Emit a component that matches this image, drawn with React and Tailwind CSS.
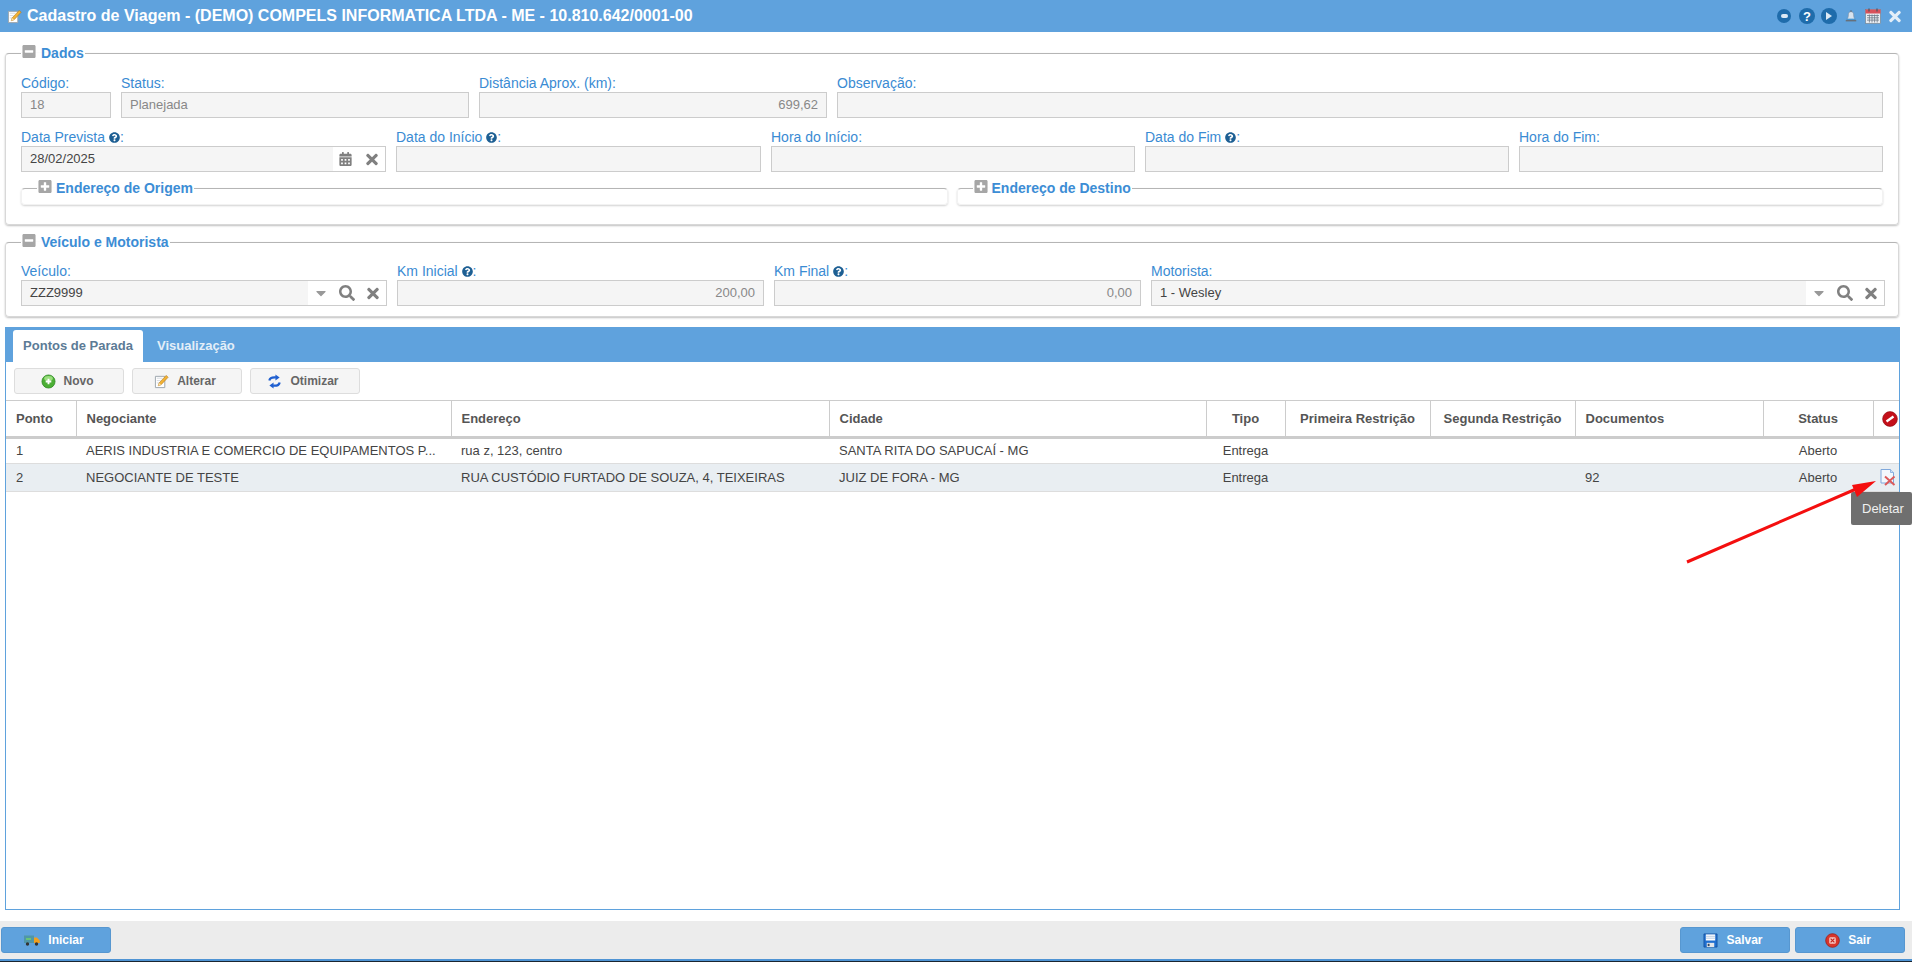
import { FaCalendarAlt, FaSearch, FaTimes, FaCaretDown, FaQuestionCircle, FaMinusSquare, FaPlusSquare } from 'react-icons/fa'

const COLUMNS = [
  { title: 'Ponto', width: 70 },
  { title: 'Negociante', width: 375 },
  { title: 'Endereço', width: 378 },
  { title: 'Cidade', width: 377 },
  { title: 'Tipo', width: 79, center: true },
  { title: 'Primeira Restrição', width: 145, center: true },
  { title: 'Segunda Restrição', width: 145, center: true },
  { title: 'Documentos', width: 188 },
  { title: 'Status', width: 110, center: true },
]

const ROWS = [
  { ponto: '1', negociante: 'AERIS INDUSTRIA E COMERCIO DE EQUIPAMENTOS P...', endereco: 'rua z, 123, centro', cidade: 'SANTA RITA DO SAPUCAÍ - MG', docs: '' },
  { ponto: '2', negociante: 'NEGOCIANTE DE TESTE', endereco: 'RUA CUSTÓDIO FURTADO DE SOUZA, 4, TEIXEIRAS', cidade: 'JUIZ DE FORA - MG', docs: '92' },
]

function PencilDoc({ className }) {
  return (
    <svg viewBox="0 0 16 16" className={className}>
      <path d="M1.5 2.5h10v12h-10z" fill="#fff" stroke="#9aa3ab" strokeWidth="1" />
      <path d="M3 4.5h6M3 7h4M3 9.5h3" stroke="#d5dae0" strokeWidth="1" />
      <path d="M13 1.5l2 2-7.5 8-3 1 1-3z" fill="#f2b233" stroke="#b97a16" strokeWidth="0.7" />
      <path d="M4.5 12.5l1-3 2 2z" fill="#f6dfb0" />
    </svg>
  )
}

function GreenPlus({ className }) {
  return (
    <svg viewBox="0 0 16 16" className={className}>
      <circle cx="8" cy="8" r="7" fill="#4caf35" stroke="#2f8a24" strokeWidth="0.8" />
      <ellipse cx="8" cy="4.8" rx="4.6" ry="2.6" fill="#9ade7e" />
      <path d="M8 5v6M5 8h6" stroke="#fff" strokeWidth="2" />
    </svg>
  )
}

function RefreshArrows({ className }) {
  return (
    <svg viewBox="0 0 16 16" className={className} fill="none">
      <path d="M2.5 7C3 4.5 5.5 3.2 9.5 3.6" stroke="#1f5fd0" strokeWidth="2.4" />
      <path d="M9 0.5l4.5 3.2L9 7z" fill="#1f5fd0" />
      <path d="M13.5 9c-.5 2.5-3 3.8-7 3.4" stroke="#1f5fd0" strokeWidth="2.4" />
      <path d="M7 9l-4.5 3.3L7 15.5z" fill="#1f5fd0" />
    </svg>
  )
}

function RedBlock({ className }) {
  return (
    <svg viewBox="0 0 16 16" className={className}>
      <circle cx="8" cy="8" r="7.4" fill="#c4101a" stroke="#8c0a10" strokeWidth="0.6" />
      <path d="M4.5 10.5l7-5" stroke="#fff" strokeWidth="2.4" />
    </svg>
  )
}

function DeleteDoc({ className }) {
  return (
    <svg viewBox="0 0 16 17" className={className}>
      <path d="M1 .5h9.5l3 3V14H1z" fill="#f4f8fd" stroke="#7fa8dc" strokeWidth="1" />
      <path d="M10.5.5v3h3" fill="#cfe0f5" stroke="#7fa8dc" strokeWidth="0.8" />
      <path d="M5 7.5l9.5 8.5M14.5 7.5L5 16" stroke="#dc5a5a" strokeWidth="2" />
    </svg>
  )
}

function Truck({ className }) {
  return (
    <svg viewBox="0 0 16 11" className={className}>
      <rect x="0" y="0.5" width="10" height="7.5" fill="#4f97a8" />
      <path d="M2 4h5" stroke="#6fd06f" strokeWidth="1.6" />
      <path d="M10 2.5h3l2.8 3V8H10z" fill="#f0a020" />
      <circle cx="3.5" cy="9" r="1.7" fill="#333" />
      <circle cx="12.5" cy="9" r="1.7" fill="#333" />
    </svg>
  )
}

function Floppy({ className }) {
  return (
    <svg viewBox="0 0 16 16" className={className}>
      <path d="M1 1h14v14H1z" fill="#1f6fd0" stroke="#134c96" strokeWidth="0.8" />
      <rect x="3" y="1.5" width="10" height="6.5" fill="#fff" />
      <path d="M3 3.5h10M3 5.5h10" stroke="#9fb9d8" strokeWidth="0.8" />
      <rect x="4" y="10.5" width="8" height="4.5" fill="#e3e6ea" />
      <rect x="5" y="11.5" width="2" height="2.5" fill="#33475f" />
    </svg>
  )
}

function RedClose({ className }) {
  return (
    <svg viewBox="0 0 16 16" className={className}>
      <circle cx="8" cy="8" r="7.3" fill="#d8352b" stroke="#9c1b14" strokeWidth="0.8" />
      <rect x="4.5" y="4.5" width="7" height="7" rx="1.5" fill="#f4c9c5" />
      <path d="M6 6l4 4M10 6l-4 4" stroke="#c4241c" strokeWidth="1.3" />
    </svg>
  )
}

function Bell({ className }) {
  return (
    <svg viewBox="0 0 16 16" className={className}>
      <path d="M7.2 1h1.6v2H7.2z" fill="#555f6b" />
      <path d="M8 2.5c-2 0-3 1.2-3 3.5 0 2.5-.6 4-2 5.5h10c-1.4-1.5-2-3-2-5.5 0-2.3-1-3.5-3-3.5z" fill="#d8e3ee" stroke="#7a8794" strokeWidth="0.6" />
      <path d="M3 10.5h10v1.2H3z" fill="#2f8fd6" />
      <path d="M2 12h12v1.6H2z" fill="#66707b" />
    </svg>
  )
}

function CalendarColor({ className }) {
  return (
    <svg viewBox="0 0 16 16" className={className}>
      <rect x="0.5" y="1.5" width="15" height="14" fill="#e9edf2" stroke="#6d7a88" strokeWidth="0.6" />
      <rect x="0.5" y="1.5" width="15" height="4" fill="#d9515a" />
      <path d="M4 .5v3M12 .5v3" stroke="#4a5560" strokeWidth="1.2" />
      <path d="M2 7.5h12M2 9.8h12M2 12.1h12M4.4 6.5v8M7 6.5v8M9.6 6.5v8M12.2 6.5v8" stroke="#6d7a88" strokeWidth="0.8" />
    </svg>
  )
}

function Help() {
  return <FaQuestionCircle className="inline-block w-[11px] h-[11px] text-[#1d5f93] align-[-1px]" />
}

function Field({ label, help, value, right, width, grow, children }) {
  return (
    <div className={grow ? 'flex-1 min-w-0' : 'shrink-0'} style={grow ? undefined : { width }}>
      <div className="h-[18px] text-[14px] leading-[18px] text-[#3a8bd3] whitespace-nowrap">
        {label}{help ? ' ' : ''}{help && <Help />}{help ? ':' : ''}
      </div>
      {children || (
        <div className={`h-[26px] border border-[#cccccc] bg-[#f5f5f5] px-[8px] text-[13px] leading-[24px] text-[#888888] ${right ? 'text-right' : ''}`}>
          {value}
        </div>
      )}
    </div>
  )
}

function LookupInput({ value, wide, children }) {
  return (
    <div className="h-[26px] border border-[#cccccc] flex items-stretch bg-white">
      <div className="flex-1 bg-[#f5f5f5] px-[8px] text-[13px] leading-[24px] text-[#444444]">{value}</div>
      <div className={`flex items-center justify-between text-[#808080] ${wide ? 'w-[78px] pl-[8px] pr-[7px]' : 'w-[52px] pl-[6px] pr-[7px]'}`}>
        {children}
      </div>
    </div>
  )
}

function CloseGlyph() {
  return <FaTimes className="w-[12px] h-[17px]" />
}

function CaretGlyph() {
  return <FaCaretDown className="w-[10px] h-[16px] text-[#999999]" />
}

function Section({ title, collapsed, nested, className, children }) {
  const Icon = collapsed ? FaPlusSquare : FaMinusSquare
  const look = nested
    ? 'border-[#f2f2f2] border-t-[#b5b5b5] shadow-[0_1px_2px_rgba(0,0,0,0.18)]'
    : 'border-[#d8d8d8] border-t-[#b5b5b5] shadow-[0_1px_2px_rgba(0,0,0,0.25)]'
  return (
    <fieldset className={`border rounded-[4px] min-w-0 ${look} ${className}`}>
      <legend className={`h-[18px] flex items-center text-[14px] font-bold text-[#3c8dd5] px-[1px] ${nested ? 'ml-[15px] gap-[4px]' : 'gap-[5px]'}`}>
        <Icon className="w-[14px] h-[15px] text-[#a6a6a6] -mt-[4px]" />
        {title}
      </legend>
      {children}
    </fieldset>
  )
}

function FormButton({ icon, children, className }) {
  return (
    <button className={`w-[110px] h-[26px] flex items-center justify-center gap-[8px] pr-[4px] rounded-[3px] border text-[12px] font-bold ${className}`}>
      {icon}
      {children}
    </button>
  )
}

export default function App() {
  return (
    <div className="w-[1912px] h-[962px] flex flex-col overflow-hidden bg-white font-['Liberation_Sans',Arial,sans-serif]">
      {/* Header */}
      <header className="h-[32px] shrink-0 bg-[#5fa2dd] flex items-center pl-[7px] pr-[11px]">
        <PencilDoc className="w-[15px] h-[15px] mr-[5px]" />
        <h1 className="flex-1 text-[16px] font-bold text-white">Cadastro de Viagem - (DEMO) COMPELS INFORMATICA LTDA - ME - 10.810.642/0001-00</h1>
        <div className="flex items-center">
          <div className="w-[14px] h-[14px] rounded-full bg-[#1f6cab] flex items-center justify-center">
            <div className="w-[7px] h-[4px] rounded-full bg-[#dbe9f5]" />
          </div>
          <div className="ml-[8px] w-[16px] h-[16px] rounded-full bg-[#1f6cab] flex items-center justify-center text-white text-[13px] font-bold leading-none">?</div>
          <div className="ml-[6px] w-[16px] h-[16px] rounded-full bg-[#1f6cab] flex items-center justify-center">
            <div className="w-0 h-0 border-y-[4px] border-y-transparent border-l-[6px] border-l-[#dbe9f5]" />
          </div>
          <Bell className="ml-[7px] w-[14px] h-[15px]" />
          <CalendarColor className="ml-[7px] w-[16px] h-[16px]" />
          <FaTimes className="ml-[8px] w-[12px] h-[17px] text-[#e3eef8]" />
        </div>
      </header>

      <main className="flex-1 min-h-0 flex flex-col pl-[5px] pr-[12px]">
        {/* Dados */}
        <Section title="Dados" className="mt-[12px] mr-[1px] px-[15px] pt-[12px] pb-[19px]">
          <div className="flex gap-[10px]">
            <Field label="Código:" value="18" width={90} />
            <Field label="Status:" value="Planejada" width={348} />
            <Field label="Distância Aprox. (km):" value="699,62" right width={348} />
            <Field label="Observação:" value="" grow />
          </div>
          <div className="flex gap-[10px] mt-[10px]">
            <Field label="Data Prevista" help width={365}>
              <LookupInput value="28/02/2025">
                <FaCalendarAlt className="w-[13px] h-[14px]" />
                <CloseGlyph />
              </LookupInput>
            </Field>
            <Field label="Data do Início" help value="" width={365} />
            <Field label="Hora do Início:" value="" width={364} />
            <Field label="Data do Fim" help value="" width={364} />
            <Field label="Hora do Fim:" value="" grow />
          </div>
          <div className="flex gap-[9px] mt-[7px]">
            <Section title="Endereço de Origem" collapsed nested className="flex-1 h-[26px]" />
            <Section title="Endereço de Destino" collapsed nested className="flex-1 h-[26px]" />
          </div>
        </Section>

        {/* Veiculo e Motorista */}
        <Section title="Veículo e Motorista" className="mt-[8px] mr-[1px] px-[15px] pt-[11px] pb-[10px]">
          <div className="flex gap-[10px] -mr-[2px]">
            <Field label="Veículo:" width={366}>
              <LookupInput value="ZZZ9999" wide>
                <CaretGlyph />
                <FaSearch className="w-[16px] h-[16px]" />
                <CloseGlyph />
              </LookupInput>
            </Field>
            <Field label="Km Inicial" help value="200,00" right width={367} />
            <Field label="Km Final" help value="0,00" right width={367} />
            <Field label="Motorista:" grow>
              <LookupInput value="1 - Wesley" wide>
                <CaretGlyph />
                <FaSearch className="w-[16px] h-[16px]" />
                <CloseGlyph />
              </LookupInput>
            </Field>
          </div>
        </Section>

        {/* Pontos de Parada */}
        <section className="relative mt-[10px] flex-1 min-h-0 border-x border-b border-[#5fa2dd] flex flex-col">
          <div className="h-[35px] shrink-0 bg-[#5fa2dd] flex items-end pl-[8px] -mx-px">
            <div className="w-[130px] h-[32px] bg-white rounded-t-[3px] flex items-center justify-center text-[13px] font-bold text-[#5c7b96]">Pontos de Parada</div>
            <div className="h-[32px] flex items-center pl-[14px] text-[13px] font-bold text-[#e3eef8]">Visualização</div>
          </div>

          <div className="h-[38px] shrink-0 flex items-start gap-[8px] pt-[6px] pl-[8px]">
            <FormButton className="bg-[#f5f5f5] border-[#dddddd] text-[#666666]" icon={<GreenPlus className="w-[15px] h-[15px]" />}>Novo</FormButton>
            <FormButton className="bg-[#f5f5f5] border-[#dddddd] text-[#666666]" icon={<PencilDoc className="w-[15px] h-[15px]" />}>Alterar</FormButton>
            <FormButton className="bg-[#f5f5f5] border-[#dddddd] text-[#666666]" icon={<RefreshArrows className="w-[15px] h-[15px]" />}>Otimizar</FormButton>
          </div>

          <table className="w-full table-fixed border-collapse text-[13px] text-[#444444]">
            <colgroup>
              {COLUMNS.map((col) => (
                <col key={col.title} style={{ width: col.width }} />
              ))}
              <col />
            </colgroup>
            <thead>
              <tr className="h-[37px] border-t border-b-[3px] border-[#cccccc]">
                {COLUMNS.map((col) => (
                  <th key={col.title} className={`border-r border-[#cccccc] px-[10px] font-bold text-[13px] text-[#555555] ${col.center ? 'text-center' : 'text-left'}`}>
                    {col.title}
                  </th>
                ))}
                <th>
                  <RedBlock className="w-[16px] h-[16px] ml-auto mr-px" />
                </th>
              </tr>
            </thead>
            <tbody>
              {ROWS.map((row, i) => (
                <tr key={row.ponto} className={`border-b border-[#dddddd] ${i === 1 ? 'h-[28px] bg-[#e9eef2]' : 'h-[26px]'}`}>
                  <td className="px-[10px]">{row.ponto}</td>
                  <td className="px-[10px] whitespace-nowrap">{row.negociante}</td>
                  <td className="px-[10px] whitespace-nowrap">{row.endereco}</td>
                  <td className="px-[10px] whitespace-nowrap">{row.cidade}</td>
                  <td className="px-[10px] text-center">Entrega</td>
                  <td />
                  <td />
                  <td className="px-[10px]">{row.docs}</td>
                  <td className="px-[10px] text-center">Aberto</td>
                  <td className="align-middle">
                    {i === 1 && <DeleteDoc className="w-[16px] h-[17px] ml-[7px]" />}
                  </td>
                </tr>
              ))}
            </tbody>
          </table>

          {/* Tooltip */}
          <div className="absolute left-[1845px] top-[165px] w-[61px] h-[33px] bg-[#6f6f6f] rounded-[2px] pl-[11px] text-[13px] leading-[33px] text-[#f0f0f0]">Deletar</div>
          {/* Annotation arrow */}
          <svg className="absolute left-[1675px] top-[146px] w-[210px] h-[100px]" viewBox="0 0 210 100">
            <path d="M6 89L182 13" stroke="#f40f0f" strokeWidth="3" fill="none" />
            <path d="M195 8L171 12L176 24z" fill="#f40f0f" />
          </svg>
        </section>
      </main>

      {/* Footer */}
      <footer className="mt-[11px] h-[38px] shrink-0 bg-[#ececec] flex items-center justify-between pl-[1px] pr-[7px]">
        <FormButton className="bg-[#5fa2dd] border-[#5797d0] text-white" icon={<Truck className="w-[16px] h-[11px]" />}>Iniciar</FormButton>
        <div className="flex gap-[5px]">
          <FormButton className="bg-[#5fa2dd] border-[#5797d0] text-white" icon={<Floppy className="w-[15px] h-[15px]" />}>Salvar</FormButton>
          <FormButton className="bg-[#5fa2dd] border-[#5797d0] text-white" icon={<RedClose className="w-[15px] h-[15px]" />}>Sair</FormButton>
        </div>
      </footer>
      <div className="h-[2px] shrink-0 bg-[#4f94d4]" />
      <div className="h-px shrink-0 bg-[#1a2530]" />
    </div>
  )
}
